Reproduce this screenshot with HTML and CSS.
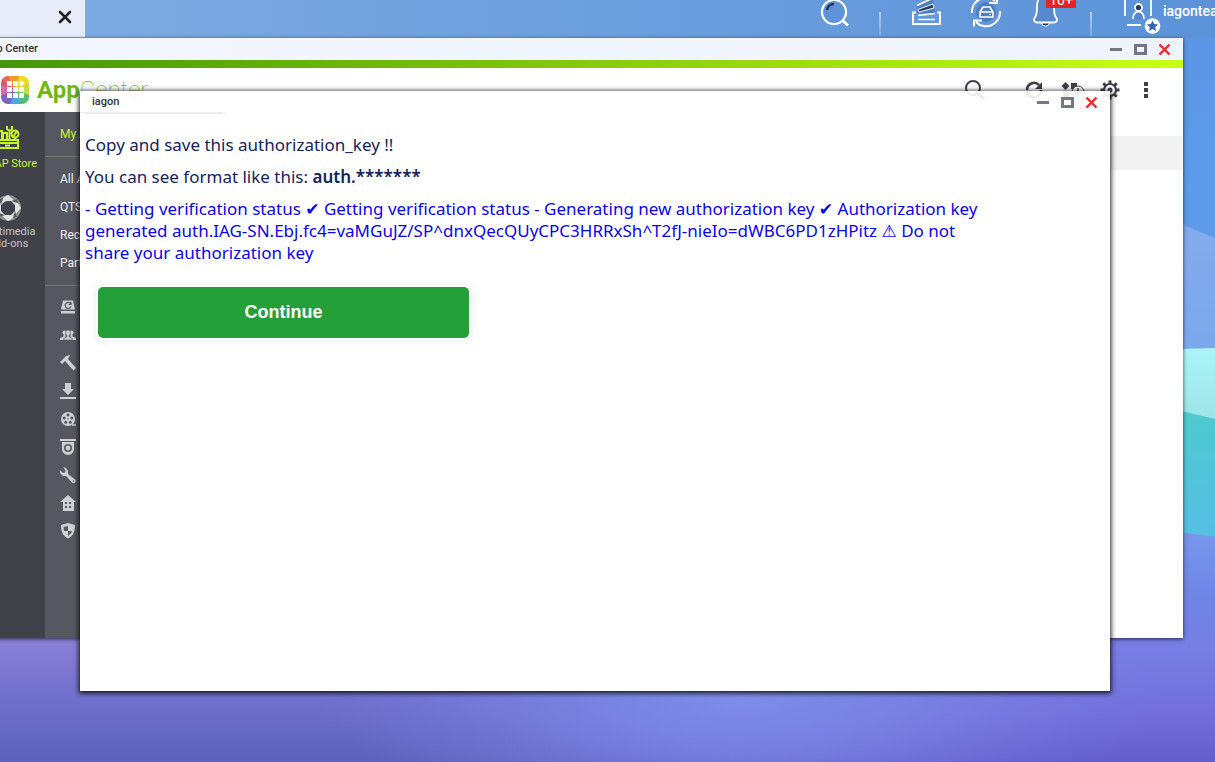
FILE: index.html
```html
<!DOCTYPE html>
<html lang="en">
<head>
<meta charset="utf-8">
<title>iagon</title>
<link rel="stylesheet" href="styles.css">
</head>
<body>
<div class="desktop">
  <svg class="wallpaper" viewBox="0 0 1215 762" preserveAspectRatio="none" aria-hidden="true">
    <defs>
      <linearGradient id="sky" x1="0" y1="0" x2="0" y2="1"><stop offset="0" stop-color="#5b95e3"/><stop offset=".25" stop-color="#5d9bea"/><stop offset="1" stop-color="#5d9bea"/></linearGradient>
      <linearGradient id="haze" x1="0" y1="0" x2="0" y2="1"><stop offset="0" stop-color="#86abec"/><stop offset="1" stop-color="#7aa8ec"/></linearGradient>
      <linearGradient id="ice" x1="0" y1="0" x2="0" y2="1"><stop offset="0" stop-color="#aaf4f6"/><stop offset="1" stop-color="#9ce2e8"/></linearGradient>
      <linearGradient id="teal" x1="0" y1="0" x2="0" y2="1"><stop offset="0" stop-color="#4ccbca"/><stop offset="1" stop-color="#57bee6"/></linearGradient>
      <linearGradient id="dusk" x1="0" y1="0" x2="0" y2="1"><stop offset="0" stop-color="#7b99ec"/><stop offset=".3" stop-color="#6e86e6"/><stop offset=".55" stop-color="#787ce2"/><stop offset=".8" stop-color="#736edb"/><stop offset="1" stop-color="#625dcb"/></linearGradient>
      <linearGradient id="ground" x1="0" y1="0" x2="0" y2="1"><stop offset="0" stop-color="#9488dc"/><stop offset=".3" stop-color="#8378d2"/><stop offset=".55" stop-color="#7070cc"/><stop offset="1" stop-color="#5d62bb"/></linearGradient>
      <radialGradient id="glow" cx=".5" cy=".5" r=".5"><stop offset="0" stop-color="#7f8ce8"/><stop offset=".35" stop-color="#7b86e4" stop-opacity=".85"/><stop offset="1" stop-color="#7b7de0" stop-opacity="0"/></radialGradient>
      <linearGradient id="fade" x1="0" y1="0" x2="1" y2="0"><stop offset="0" stop-color="#fff" stop-opacity="0"/><stop offset="1" stop-color="#fff"/></linearGradient>
      <mask id="blend"><rect x="500" y="500" width="400" height="262" fill="url(#fade)"/><rect x="900" y="500" width="315" height="262" fill="#fff"/></mask>
    </defs>
    <rect width="1215" height="762" fill="url(#sky)"/>
    <path d="M1100 191L1215 238V351H1100Z" fill="url(#haze)"/>
    <path d="M1100 351L1215 348V425H1100Z" fill="url(#ice)"/>
    <path d="M1100 392L1215 419V545H1100Z" fill="url(#teal)"/>
    <rect y="620" width="1215" height="142" fill="url(#ground)"/>
    <path d="M0 521H1100L1215 537V762H0Z" fill="url(#dusk)" mask="url(#blend)"/>
    <ellipse cx="740" cy="695" rx="420" ry="140" fill="url(#glow)"/>
  </svg>

  <header class="taskbar">
    <div class="task-tab"><button class="tab-close" aria-label="Close tab"><svg viewBox="0 0 14 14" width="14" height="14"><path d="M2 2l10 10M12 2L2 12" stroke="#222" stroke-width="2.6" stroke-linecap="round"/></svg></button></div>
    <nav class="tray" aria-label="System">
      <button class="tray-btn" aria-label="Search"><svg width="32" height="38" viewBox="0 0 32 38" fill="none" stroke="#fff" stroke-width="2.2"><circle cx="15" cy="12" r="12" fill="#5f93d8"/><path d="M8 10a7 7 0 0 1 7-6" stroke="#1f3557" stroke-width="2.6"/><path d="M23 20l6 5.500" stroke-width="2.8"/></svg></button>
      <span class="divider"></span>
      <button class="tray-btn" aria-label="Tasks"><svg width="32" height="38" viewBox="0 0 32 38" fill="none" stroke="#fff" stroke-width="1.6"><path d="M7 5L23-2l2 15H7z" fill="#4f7fc0" stroke="none"/><path d="M7 5.500L21-1"/><path d="M8 9.500L23 4l1 4-15 4z" fill="#263b5e" stroke="#edf5ff" stroke-width="1"/><path d="M8 15.500l17-2M8 19.500h17"/><path d="M6 12.500H3V24h27V12.500h-3" stroke-width="2"/></svg></button>
      <button class="tray-btn" aria-label="Backup"><svg width="32" height="38" viewBox="0 0 32 38" fill="none" stroke="#fff" stroke-width="2"><circle cx="16" cy="12" r="10" fill="#4f7fc0" stroke="none"/><path d="M2 13A14 14 0 0 1 25 1M19 3h8v-6M30 11A14 14 0 0 1 6 22M12 20.500H4v6"/><path d="M10 12l3-5h7l3 5v5H10zM10 12h13" stroke-width="1.600"/><circle cx="20" cy="14.500" r=".8" fill="#fff" stroke="none"/></svg></button>
      <button class="tray-btn" aria-label="Notifications"><svg width="32" height="38" viewBox="0 0 32 38" fill="none" stroke="#fff" stroke-width="1.8"><path d="M15.500-4C10-4 7 0 7 6c0 9-1 10-3 13 0 2 1 3.500 3 3.500h17c2 0 3-1.500 3-3.500-2-3-3-4-3-13 0-6-3-10-8.500-10z" fill="#5788cc"/><path d="M11.500 23a4 3 0 0 0 8 0z" fill="#223554" stroke-width="1"/></svg><span class="badge">10+</span></button>
      <span class="divider"></span>
      <button class="tray-btn user" aria-label="Account"><svg width="40" height="38" viewBox="0 0 40 38" fill="none" stroke="#fff" stroke-width="1.8"><path d="M4 16V-2h26v18M6 25h14"/><path d="M12 19c0-10 11-10 11 0" fill="#5488d0"/><circle cx="17.500" cy="7.500" r="3.500" fill="#223b60"/><circle cx="31.500" cy="26" r="7.800" fill="#fff" stroke="none"/><path d="M31.500 20.500l1.700 3.600 4 .4-3 2.700.8 3.900-3.500-2-3.500 2 .8-3.900-3-2.700 4-.4z" fill="#3b65a4" stroke="none"/></svg></button>
      <span class="user-name">iagontea</span>
    </nav>
  </header>

  <section class="window app-center" aria-label="App Center">
    <div class="titlebar">
      <span class="title">App Center</span>
      <div class="controls">
        <button aria-label="Minimize"><svg width="14" height="12" viewBox="0 0 14 12"><path d="M1 6.500h12" stroke="#717883" stroke-width="3"/></svg></button>
        <button aria-label="Maximize"><svg width="14" height="12" viewBox="0 0 14 12"><path d="M2.500 2.500h10v8h-10z" fill="none" stroke="#717883" stroke-width="3"/></svg></button>
        <button aria-label="Close"><svg width="14" height="12" viewBox="0 0 14 12"><path d="M2.500 1.500l10 10M12.500 1.500l-10 10" stroke="#ee2a2a" stroke-width="2.400"/></svg></button>
      </div>
    </div>
    <div class="stripe"></div>
    <div class="app-header">
      <svg class="logo" width="28" height="28" viewBox="0 0 28 28" aria-hidden="true"><clipPath id="round"><rect width="28" height="28" rx="7"/></clipPath><g clip-path="url(#round)"><path fill="#e8635b" d="M0 0h9l5 14z"/><path fill="#f49a2c" d="M7 0h12l-5 14z"/><path fill="#f2d91f" d="M18 0h10v9l-14 5z"/><path fill="#c5dc42" d="M28 7v13l-14-6z"/><path fill="#55be70" d="M28 19v9h-9l-5-14z"/><path fill="#48a9e2" d="M20 28H8l6-14z"/><path fill="#7a62c0" d="M9 28H0v-9l14-5z"/><path fill="#d76bab" d="M0 20V6l14 8z"/><path fill="#d85b60" d="M0 0l14 14L0 9z"/></g><path fill="#fff" d="M6 5h5v5H6zM12 5h5v5h-5zM6 11h5v5H6zM12 11h5v5h-5zM18 11h5v5h-5zM6 17h5v5H6zM12 17h5v5h-5zM18 17h5v5h-5zM20.500 4l3.200 3.200-3.200 3.200-3.200-3.200z"/></svg>
      <span class="brand"><b>App</b>Center</span>
      <div class="tools">
        <button class="find" aria-label="Search apps"><svg width="24" height="24" viewBox="0 0 24 24" fill="none" stroke="#3f3f49" stroke-width="2"><circle cx="11" cy="10" r="7"/><path d="M16 15l6 6" stroke-width="3"/></svg></button>
        <button aria-label="Refresh"><svg width="24" height="24" viewBox="0 0 24 24" fill="none" stroke="#3f3f49" stroke-width="2.600"><path d="M5 12a7 7 0 0 1 12-5M19 12a7 7 0 0 1-12 5"/><path d="M20 4v7h-7zM4 20v-7h7z" fill="#3f3f49" stroke="none"/></svg></button>
        <button aria-label="Install manually"><svg width="28" height="24" viewBox="0 0 28 24" fill="#3f3f49"><path d="M7.500 4l4 4-4 4-4-4zM13 5h6v6h-6zM5 13h6v6H5z"/><circle cx="20" cy="14" r="6" fill="#fff" stroke="#3f3f49"/><path d="M20 10v8M16 14h8" stroke="#3f3f49" stroke-width="1.500"/></svg></button>
        <button aria-label="Settings"><svg width="24" height="24" viewBox="0 0 24 24" fill="none" stroke="#3f3f49"><circle cx="12" cy="12" r="6" stroke-width="2.200"/><path d="M12 2.500V6M12 18v3.500M2.500 12H6M18 12h3.500M5.300 5.300l2.400 2.400M16.300 16.300l2.400 2.400M5.300 18.700l2.400-2.400M16.300 7.700l2.400-2.400" stroke-width="3"/><circle cx="12" cy="12" r="1.500" stroke-width="2"/></svg></button>
        <button aria-label="More"><svg width="24" height="24" viewBox="0 0 24 24" fill="#3f3f49"><path d="M10 4h4v4h-4zM10 10h4v4h-4zM10 16h4v4h-4z"/></svg></button>
      </div>
    </div>
    <div class="app-body">
      <nav class="rail" aria-label="Stores">
        <a class="rail-item active" href="#"><svg width="32" height="28" viewBox="0 0 32 28" fill="none" stroke="#c8f52a" stroke-width="2"><path d="M3 14h23v8H3zM3 17h23M13 19.500h5"/><path d="M5 14V5h5v9M11 14V7h4v7M15 0v3c2 2 4 2 5 0V0M17.500 4v10"/><circle cx="23" cy="8" r="3.500"/><path d="M21 11l4-6M23 12v3"/></svg><span>QNAP Store</span></a>
        <a class="rail-item" href="#"><svg width="28" height="28" viewBox="0 0 28 28"><circle cx="14" cy="14" r="13" fill="#909090"/><path fill="#e2e2e2" d="M14 1l8 7-9-1-6 5 2-8zM27 14l-7 8 1-9-5-6 8 2zM14 27l-8-7 9 1 6-5-2 8zM1 14l7-8-1 9 5 6-8-2z"/><path fill="#5c5c5c" d="M23 5l1 4-7-2zM23 23l-4 1 2-7zM5 23l-1-4 7 2zM5 5l4-1-2 7z"/><path d="M11 7.500l6-.5 4 4 0 6-4 4-6 0-4-4 0-6z" fill="#41414a"/></svg><span>Multimedia<br>Add-ons</span></a>
      </nav>
      <nav class="menu" aria-label="Categories">
        <div class="group top"><a class="active" href="#">My Apps</a></div>
        <div class="group"><a href="#">All Apps</a><a href="#">QTS Essentials</a><a href="#">Recommended</a><a href="#">Partners</a></div>
        <div class="group icons">
          <a href="#" aria-label="Backup"><svg viewBox="0 0 16 16"><path fill="currentColor" d="M3 1.500h10l2 9H1zM1 12h14v2.500H1z"/><path d="M10.500 4.500a3 3 0 1 0 .5 3M11 3v2.500H8.500" fill="none" stroke="#575761" stroke-width="1.200"/></svg></a>
          <a href="#" aria-label="Collaboration"><svg viewBox="0 0 16 16" fill="currentColor"><circle cx="4.500" cy="5.500" r="2"/><circle cx="11.500" cy="5.500" r="2"/><path d="M3.500 7h2v2.500L5 13H0v-2l3.500-1.500zM12.500 7h-2v2.500L11 13h5v-2l-3.500-1.500z"/><path d="M8 3c1.500 0 2.300 1 2.300 2.500S9.800 8 9.300 8.500v1.500l3 1.500V13H3.700v-1.500l3-1.500V8.500C6.200 8 5.700 7 5.700 5.500S6.500 3 8 3z" stroke="#575761" stroke-width=".7"/></svg></a>
          <a href="#" aria-label="Tools"><svg viewBox="0 0 16 16" fill="currentColor"><path d="M0 7l6-6 4-1-2 4 8 9-2.500 2.500L5 6 2 9z"/></svg></a>
          <a href="#" aria-label="Download"><svg viewBox="0 0 16 16" fill="currentColor"><path d="M5 0h6v6h3l-6 6-6-6h3zM0 14h16v2H0z"/></svg></a>
          <a href="#" aria-label="Entertainment"><svg viewBox="0 0 16 16"><circle cx="8" cy="8" r="7" fill="currentColor"/><path d="M12 14h4" stroke="currentColor" stroke-width="1.500"/><g fill="#575761"><circle cx="8" cy="4" r="1.500"/><circle cx="11.800" cy="7" r="1.500"/><circle cx="10.300" cy="11.300" r="1.500"/><circle cx="5.700" cy="11.300" r="1.500"/><circle cx="4.200" cy="7" r="1.500"/><circle cx="8" cy="8" r=".7"/></g></svg></a>
          <a href="#" aria-label="Surveillance"><svg viewBox="0 0 16 16"><path fill="currentColor" d="M0 0h16v2H0zM2 3h12v7a6 6 0 0 1-12 0z"/><circle cx="8" cy="9" r="3.200" fill="none" stroke="#575761" stroke-width="1.600"/></svg></a>
          <a href="#" aria-label="Utilities"><svg viewBox="0 0 16 16"><path fill="currentColor" d="M3 0l3 1 2 3v3l7 5.500a2 2 0 0 1-3 3L6 9H3L0 6V3l3 3 2-.5.500-2z"/><circle cx="13.500" cy="14" r=".8" fill="#575761"/></svg></a>
          <a href="#" aria-label="Home Automation"><svg viewBox="0 0 16 16"><path fill="currentColor" d="M8 0l8 7h-2v9H3V7H0z"/><path fill="#575761" d="M5 7h2v2H5zM9 7h2v2H9zM5 11h2v2H5zM9 11h2v2H9z"/></svg></a>
          <a href="#" aria-label="Security"><svg viewBox="0 0 16 16"><path fill="currentColor" d="M8 0l7 2c0 7-2 11-7 13.500C3 13 1 9 1 2z"/><path fill="#575761" d="M8 3v5H4L3.500 4zM8 8h4c-.5 2-2 3.500-4 5z"/></svg></a>
        </div>
      </nav>
      <main class="content"><div class="band"></div></main>
    </div>
  </section>

  <section class="window dialog" aria-label="iagon">
    <div class="titlebar">
      <span class="title">iagon</span>
      <div class="controls">
        <button aria-label="Minimize"><svg width="14" height="12" viewBox="0 0 14 12"><path d="M1 6.500h12" stroke="#717883" stroke-width="3"/></svg></button>
        <button aria-label="Maximize"><svg width="14" height="12" viewBox="0 0 14 12"><path d="M2.500 2.500h10v8h-10z" fill="none" stroke="#717883" stroke-width="3"/></svg></button>
        <button aria-label="Close"><svg width="14" height="12" viewBox="0 0 14 12"><path d="M2.500 1.500l10 10M12.500 1.500l-10 10" stroke="#ee2a2a" stroke-width="2.400"/></svg></button>
      </div>
    </div>
    <div class="dialog-body">
      <div class="rule"></div>
      <p>Copy and save this authorization_key !!</p>
      <p>You can see format like this: <b>auth.*******</b></p>
      <p class="log">- Getting verification status ✔ Getting verification status - Generating new authorization key ✔ Authorization key<br>generated auth.IAG-SN.Ebj.fc4=vaMGuJZ/SP^dnxQecQUyCPC3HRRxSh^T2fJ-nieIo=dWBC6PD1zHPitz ⚠ Do not<br>share your authorization key</p>
      <button class="continue">Continue</button>
    </div>
  </section>
</div>
</body>
</html>
```
FILE: styles.css
```css
* { box-sizing: border-box; }
body { margin: 0; font-family: Roboto, "Liberation Sans", sans-serif; }
button { border: 0; padding: 0; background: none; font: inherit; }
a { color: inherit; text-decoration: none; }
svg { display: block; }

.desktop { position: relative; height: 100vh; overflow: hidden; background: #5b95e3; }
.wallpaper { position: absolute; inset: 0; width: 100%; height: 100%; }

/* Taskbar */
.taskbar { position: relative; display: flex; justify-content: space-between; height: 38px; background: linear-gradient(90deg, #7fabe2, #6c9fde 50%, #5c93d8); overflow: hidden; }
.task-tab { display: flex; align-items: center; justify-content: flex-end; width: 85px; height: 37px; padding: 0 13px 3px 0; background: #e6edf8; }
.tray { display: flex; gap: 28px; }
.tray-btn { position: relative; flex: none; }
.divider { width: 2px; height: 24px; margin: 12px 1px 0 0; background: linear-gradient(#b9cfed, #7ea9df); }
.badge { position: absolute; left: 16px; top: -6px; width: 30px; height: 14px; background: #e02525; color: #fff; font-size: 14px; line-height: 13px; text-align: center; }
.user-name { width: 52px; margin-left: -26px; color: #fff; font-size: 14px; font-weight: 500; line-height: 23px; white-space: nowrap; }

/* Windows */
.window { position: absolute; display: flex; flex-direction: column; color: #333; }
.titlebar { display: flex; align-items: center; justify-content: space-between; flex: none; height: 22px; }
.title { padding-bottom: 2px; font-size: 11px; font-weight: 500; }
.controls { display: flex; gap: 10px; }

.app-center { left: -29px; right: 32px; top: 38px; bottom: 124px; background: #fff; box-shadow: 0 1px 4px rgba(0, 0, 0, .7); }
.app-center .titlebar { padding: 0 12px; background: linear-gradient(90deg, #f4f6ff, #eef4fd); }
.stripe { flex: none; height: 8px; background: linear-gradient(90deg, #419408, #c8ff12); }
.app-header { display: flex; align-items: center; flex: none; height: 44px; padding: 0 25px 0 30px; }
.brand { margin-left: 8px; color: #72b812; font-size: 24px; font-weight: 100; }
.brand b { font-weight: 700; }
.tools { display: flex; gap: 12px; margin-left: auto; }
.find { margin-right: 24px; }
.app-body { display: flex; flex: 1; min-height: 0; }

.rail { flex: none; width: 74px; padding-top: 14px; background: #41414a; }
.rail-item { display: flex; flex-direction: column; align-items: center; gap: 4px; margin-bottom: 24px; color: #c4c4c8; font-size: 11px; line-height: 12px; text-align: center; }
.rail-item.active { color: #c8f52a; }

.menu { flex: none; width: 180px; background: #575761; color: #f0f0f0; font-size: 12px; line-height: 28px; }
.group { padding: 8px 15px; border-bottom: 1px solid #74766f; }
.group.icons { padding-top: 7px; border: 0; color: #ccd1d3; }
.group a { display: flex; align-items: center; height: 28px; }
.group .active { color: #c8f52a; }
.icons svg { width: 16px; height: 16px; }
.content { flex: 1; padding-top: 24px; }
.band { height: 34px; background: #f2f2f2; }

.dialog { left: 80px; right: 105px; top: 91px; bottom: 71px; box-shadow: 0 1px 5px 1px rgba(0, 0, 0, .9); }
.dialog .titlebar { padding: 0 12px; background: rgba(255, 255, 255, .9); }
.dialog-body { flex: 1; background: #fff; padding: 0 5px; color: #14245c; font-family: "Noto Sans", "DejaVu Sans", sans-serif; font-size: 17px; line-height: 22px; }
.rule { width: 138px; height: 1px; margin-bottom: 20px; background: #ececec; }
.dialog-body p { margin: 0 0 10px; white-space: nowrap; }
.dialog-body .log { color: #0a04f0; }
.dialog-body b { font-weight: 600; }
.continue { display: block; width: 100%; max-width: 371px; height: 51px; margin: 23px 13px 0; border-radius: 5px; background: #259f3a; color: #fff; font: bold 18px "Liberation Sans", Arial, sans-serif; box-shadow: 0 0 0 2px #fff, 0 0 6px 2px rgba(0, 0, 0, .1); }
```
